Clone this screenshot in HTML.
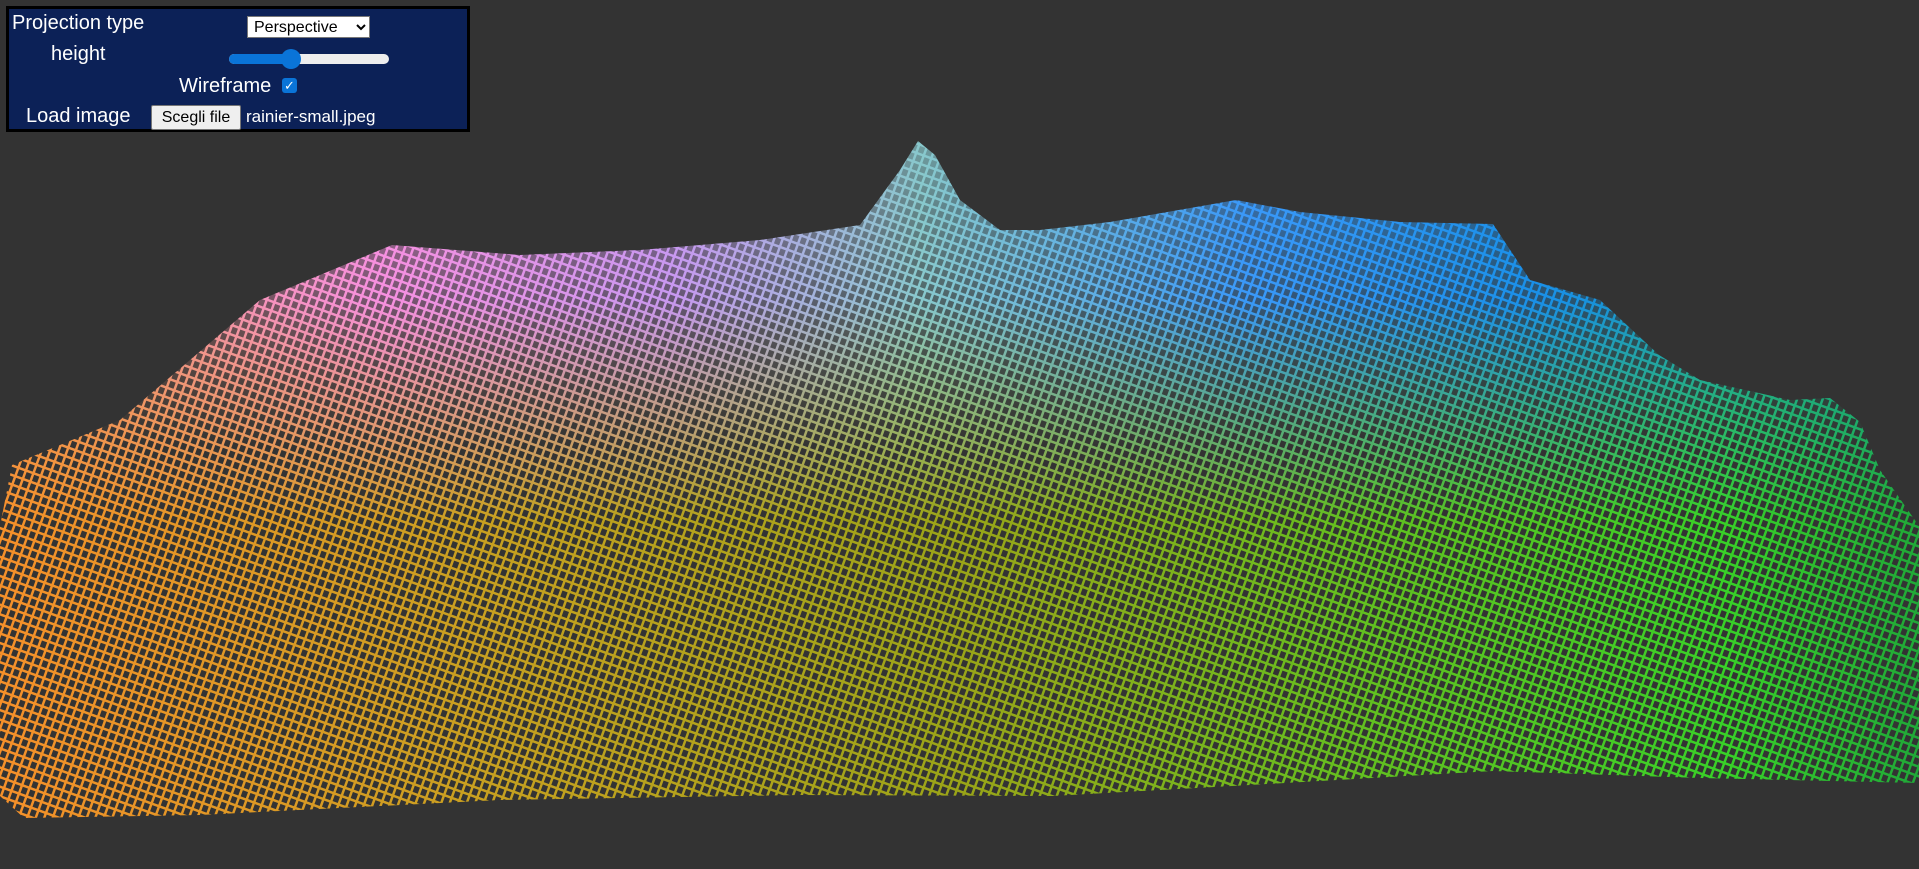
<!DOCTYPE html>
<html><head><meta charset="utf-8"><style>
html,body{margin:0;padding:0;background:#333;width:1919px;height:869px;overflow:hidden;font-family:"Liberation Sans",Arial,sans-serif}
#ui{position:absolute;left:6px;top:6px;width:458px;height:120px;background:#0c2157;border:3px solid #000;color:#fff;font-size:20px}
.t{position:absolute;white-space:nowrap}
select{position:absolute;left:238px;top:7px;width:123px;height:22px;font:16px "Liberation Sans",sans-serif;background:#fff;border:1px solid #777;padding:0 2px}
.sl{position:absolute;left:220px;top:45px;width:160px;height:10px;background:#eee;border-radius:5px}
.sl i{position:absolute;left:0;top:0;width:64px;height:10px;background:#0a74d8;border-radius:5px}
.sl b{position:absolute;left:52px;top:-5px;width:20px;height:20px;background:#0a74d8;border-radius:50%}
.cb{position:absolute;left:273px;top:69px;width:15px;height:15px;background:#0a74d8;border-radius:3px;color:#fff;font-size:13px;line-height:15px;text-align:center}
.btn{position:absolute;left:142px;top:96px;width:90px;height:25px;background:#efefef;border:1px solid #767676;color:#000;font-size:16px;line-height:24px;text-align:center;box-sizing:border-box;border-radius:2px}
</style></head><body>
<svg width="1919" height="869" style="position:absolute;left:0;top:0">
<defs>
<linearGradient id="top" x1="0" x2="1919" y1="0" y2="0" gradientUnits="userSpaceOnUse">
<stop offset="0" stop-color="#f59a70"/><stop offset="0.2" stop-color="#f690e0"/><stop offset="0.35" stop-color="#c898f0"/><stop offset="0.48" stop-color="#88c8cc"/><stop offset="0.65" stop-color="#3a98f8"/><stop offset="0.8" stop-color="#1a90e8"/><stop offset="1" stop-color="#10a0a0"/>
</linearGradient>
<linearGradient id="bot" x1="0" x2="1919" y1="0" y2="0" gradientUnits="userSpaceOnUse">
<stop offset="0" stop-color="#f5902a"/><stop offset="0.25" stop-color="#c8a020"/><stop offset="0.5" stop-color="#9aa418"/><stop offset="0.72" stop-color="#60c020"/><stop offset="0.9" stop-color="#38d028"/><stop offset="1" stop-color="#20a838"/>
</linearGradient>
<linearGradient id="vm" x1="0" x2="0" y1="300" y2="520" gradientUnits="userSpaceOnUse">
<stop offset="0" stop-color="#fff" stop-opacity="0"/><stop offset="1" stop-color="#fff" stop-opacity="1"/>
</linearGradient>
<mask id="m" maskUnits="userSpaceOnUse" x="0" y="0" width="1919" height="869"><rect x="0" y="0" width="1919" height="869" fill="url(#vm)"/></mask>
<pattern id="grid" width="8" height="9" patternUnits="userSpaceOnUse" patternTransform="rotate(20)">
<rect x="0" y="0" width="8" height="9" fill="#fff"/><rect x="2.5" y="2.5" width="5.5" height="6.5" fill="#000"/>
</pattern>
<linearGradient id="den" x1="0" x2="0" y1="150" y2="450" gradientUnits="userSpaceOnUse">
<stop offset="0" stop-color="#fff" stop-opacity="0.7"/><stop offset="1" stop-color="#fff" stop-opacity="0"/>
</linearGradient>
<mask id="gm" maskUnits="userSpaceOnUse" x="0" y="0" width="1919" height="869"><rect width="1919" height="869" fill="url(#grid)"/><rect width="1919" height="869" fill="url(#den)"/></mask>
<clipPath id="cp"><path d="M0,526 L12,465 L120,420 L260,300 L392,245 L520,255 L640,250 L760,240 L860,225 L900,170 L918,141 L935,155 L960,200 L1000,230 L1040,230 L1110,222 L1236,200 L1300,212 L1400,222 L1493,224 L1530,280 L1600,300 L1659,355 L1700,380 L1790,400 L1830,398 L1860,422 L1880,470 L1919,526 L1919,783 L1700,778 L1493,771 L1250,785 L1053,796 L800,795 L500,800 L200,815 L24,818 L0,796 Z"/></clipPath>
</defs>
<g clip-path="url(#cp)">
<g mask="url(#gm)">
<rect x="0" y="130" width="1919" height="700" fill="url(#top)"/>
<rect x="0" y="130" width="1919" height="700" fill="url(#bot)" mask="url(#m)"/>
</g>
</g>
</svg>
<div id="ui">
<div class="t" style="left:3px;top:3px">Projection type</div>
<select><option>Perspective</option></select>
<div class="t" style="left:42px;top:34px">height</div>
<div class="sl"><i></i><b></b></div>
<div class="t" style="left:170px;top:66px">Wireframe</div>
<div class="cb">✓</div>
<div class="t" style="left:17px;top:96px">Load image</div>
<div class="btn">Scegli file</div>
<div class="t" style="left:237px;top:98px;font-size:17px">rainier-small.jpeg</div>
</div>
</body></html>
